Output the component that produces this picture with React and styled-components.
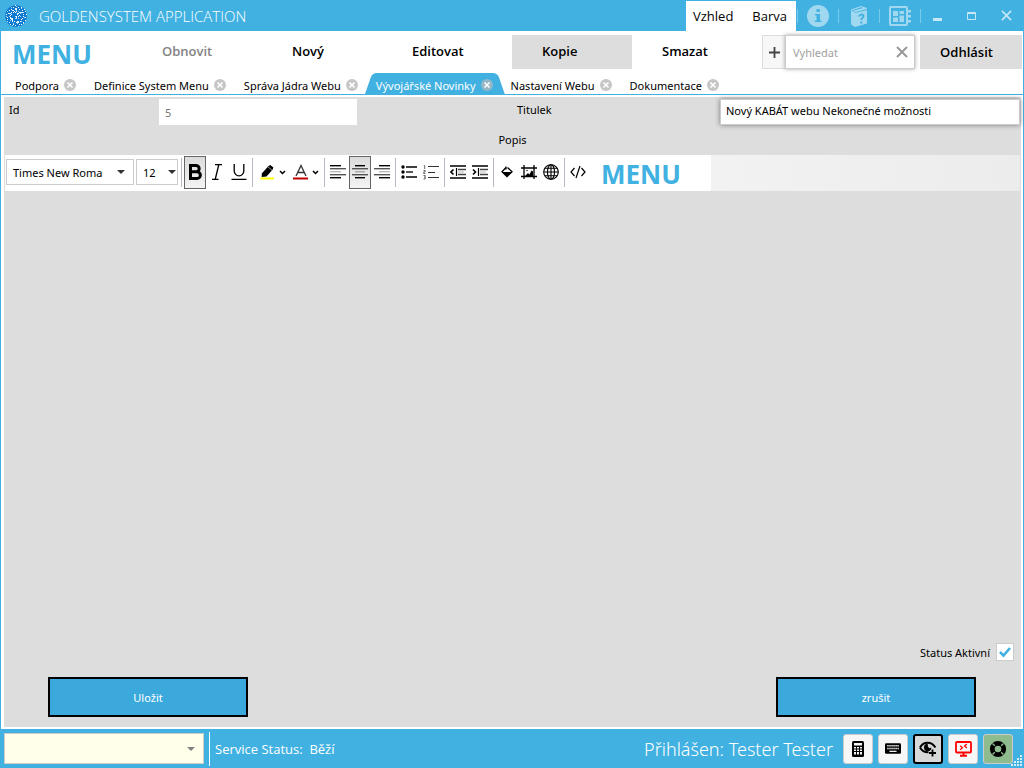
import React from "react";
import styled, { createGlobalStyle, css } from "styled-components";

const blue = "#41b1e1";
const grey = "#dddddd";

const GlobalStyle = createGlobalStyle`
  *, *::before, *::after { box-sizing: border-box; }
  body { margin: 0; }
  body, button, input, select, textarea {
    font-family: "Open Sans", "Noto Sans", "Liberation Sans", sans-serif;
  }
  button { border: 0; padding: 0; background: none; color: inherit; cursor: pointer; }
  svg { display: block; flex: none; }
`;

const smallText = css`
  font-family: "Noto Sans", "Open Sans", sans-serif;
  font-size: 11px;
`;

const Window = styled.div`
  min-height: 100vh;
  display: flex;
  flex-direction: column;
  background: ${blue};
`;

/* ---------- title bar ---------- */
const TitleBar = styled.header`
  height: 31px;
  display: flex;
  align-items: center;
  padding: 0 1px 0 4px;
  color: #fff;
`;
const AppTitle = styled.h1`
  flex: 1;
  margin: 0 0 0 11px;
  padding-top: 1px;
  font-size: 15px;
  font-weight: 300;
  line-height: 30px;
  white-space: nowrap;
`;
const ThemeMenu = styled.nav`
  display: flex;
  align-self: stretch;
  justify-content: space-between;
  width: 110px;
  margin-top: 1px;
  padding: 0 9px 0 7px;
  background: #fff;
`;
const ThemeButton = styled.button`
  color: #000;
  font-size: 13px;
  line-height: 30px;
`;
const TitleTools = styled.div`
  display: flex;
  align-items: center;
  padding: 0 1px;
`;
const TitleTool = styled.button`
  width: 41px;
  height: 31px;
  display: flex;
  align-items: center;
  justify-content: center;
  color: #a0d8f0;
`;
const ToolDivider = styled.span`
  width: 1px;
  height: 14px;
  margin-right: -1px;
  background: #7ac8ea;
`;
const WindowButton = styled.button`
  width: 34px;
  height: 31px;
  display: flex;
  align-items: center;
  justify-content: center;
  color: #c6e8f6;
`;

/* ---------- menu ---------- */
const Body = styled.div`
  flex: 1;
  display: flex;
  flex-direction: column;
  margin: 0 1px;
  background: #fff;
`;
const MenuBar = styled.div`
  height: 42px;
  display: flex;
  align-items: flex-start;
  padding: 4px 1px 0 11px;
`;
const MenuWord = styled.span`
  flex: none;
  color: ${blue};
  font-size: 26px;
  font-weight: 700;
  line-height: 34px;
`;
const MenuTitle = styled(MenuWord)`
  width: 120px;
  margin-top: 2px;
`;
const MenuGroup = styled.div`
  display: flex;
  flex: none;
  margin-right: 10px;
`;
const MenuButton = styled.button`
  width: 120px;
  height: 34px;
  padding: 0 0 2px 30px;
  text-align: left;
  font-size: 13px;
  font-weight: 600;
  color: ${(p) => (p.disabled ? "#838383" : "#000")};
  background: ${(p) => (p.$active ? grey : "transparent")};
`;
const Search = styled.div`
  flex: 1;
  min-width: 0;
  display: flex;
  margin-right: 5px;
`;
const AddButton = styled.button`
  flex: none;
  width: 23px;
  height: 34px;
  display: flex;
  align-items: center;
  justify-content: center;
  border: 1px solid ${grey};
  border-right: 0;
  background: #f7f7f7;
  color: #444;
`;
const SearchBox = styled.div`
  flex: 1;
  min-width: 0;
  height: 34px;
  display: flex;
  align-items: center;
  padding: 0 6px 0 7px;
  border: 1px solid #ccc;
  background: #fff;
  box-shadow: 0 0 4px rgba(0, 0, 0, 0.35);
  color: #999;
`;
const SearchInput = styled.input`
  ${smallText}
  flex: 1;
  min-width: 0;
  padding: 0;
  border: 0;
  outline: 0;
  &::placeholder { color: #a0a0a0; opacity: 1; }
`;
const LogoutButton = styled.button`
  flex: none;
  width: 102px;
  height: 34px;
  padding-right: 9px;
  background: ${grey};
  font-size: 13px;
  font-weight: 600;
`;

/* ---------- tabs ---------- */
const TabBar = styled.div`
  height: 22px;
  display: flex;
  border-bottom: 1px solid ${blue};
  padding-left: 5px;
`;
const Tab = styled.div`
  position: relative;
  height: 21px;
  display: flex;
  align-items: center;
  gap: 5px;
  padding: 2px 9px 0 9px;
  color: ${(p) => (p.$active ? "#fff" : "#000")};
`;
const TabShape = styled.svg`
  position: absolute;
  top: 0;
  left: -2px;
  width: calc(100% + 5px);
  height: 21px;
  fill: ${blue};
`;
const TabLabel = styled.button`
  ${smallText}
  position: relative;
  padding-top: 2px;
  line-height: 18px;
  white-space: nowrap;
`;
const TabClose = styled.button`
  position: relative;
  width: 12px;
  height: 12px;
  border-radius: 6px;
  background: ${(p) => (p.$active ? "#95b8c9" : "#c6c6c6")};
  color: #fff;
`;

/* ---------- form ---------- */
const Panel = styled.main`
  flex: 1;
  display: flex;
  flex-direction: column;
  margin: 2px 2px 2px 3px;
  background: ${grey};
`;
const FieldRow = styled.div`
  height: 28px;
  display: grid;
  grid-template-columns: 155px 1fr 203px 300px;
  padding: 2px 1px 0 0;
`;
const fieldText = css`
  ${smallText}
  line-height: 22px;
`;
const FieldLabel = styled.label`
  ${fieldText}
  padding-left: ${(p) => (p.$wide ? "0" : "5px")};
`;
const Field = styled.input`
  ${fieldText}
  width: ${(p) => (p.$full ? "100%" : "198px")};
  height: 26px;
  border: ${(p) => (p.$full ? "1px solid #ccc" : "0")};
  outline: 0;
  background: #fff;
  color: ${(p) => (p.readOnly ? "#777" : "#000")};
  padding: ${(p) => (p.$full ? "0 5px 3px" : "0 6px")};
  box-shadow: ${(p) => (p.$full ? "0 0 5px rgba(0, 0, 0, 0.45)" : "none")};
`;
const FieldCell = styled.span`
  display: flex;
`;
const Caption = styled.label`
  ${fieldText}
  height: 30px;
  padding-top: 4px;
  text-align: center;
`;
const ToolbarTray = styled.div`
  height: 36px;
  display: flex;
  margin: 0 1px;
  background: linear-gradient(90deg, #f4f4f4 60%, #ececec);
`;
const Toolbar = styled.div`
  width: 706px;
  display: flex;
  align-items: center;
  padding: 0 0 2px 1px;
  border-radius: 0 2px 2px 0;
  background: #fff;
`;
const Combo = styled.div`
  position: relative;
  width: ${(p) => (p.$small ? "42px" : "128px")};
  margin-right: ${(p) => (p.$small ? "1px" : "2px")};
`;
const ComboSelect = styled.select`
  ${smallText}
  appearance: none;
  display: block;
  width: 100%;
  height: 26px;
  padding: 0 ${(p) => (p.$small ? "14px" : "30px")} 0 6px;
  border: 1px solid #ccc;
  border-radius: 0;
  background: #fff;
  color: #000;
  overflow: hidden;
`;
const ComboArrow = styled.span`
  position: absolute;
  top: 50%;
  right: ${(p) => (p.$inset ? "9px" : "2px")};
  margin-top: -2px;
  border: 4px solid transparent;
  border-top-color: ${(p) => p.$color || "#333"};
  border-bottom: 0;
  pointer-events: none;
`;
const Divider = styled.span`
  width: 1px;
  height: 29px;
  margin: 0 2px;
  background: #b4bac4;
`;
const FormatButton = styled.button`
  width: 22px;
  height: 33px;
  display: flex;
  align-items: center;
  justify-content: center;
  ${(p) =>
    p.$pressed &&
    css`
      border: 1px solid #666;
      background: linear-gradient(#dcdcdc, #f3f3f3);
    `}
`;
const SplitGroup = styled.div`
  display: grid;
  grid-template-columns: 34px 33px;
`;
const SplitButton = styled.button`
  height: 33px;
  display: flex;
  align-items: center;
  justify-content: space-between;
  padding: 0 3px 0 4px;
`;
const ToolbarWord = styled(MenuWord)`
  margin: 4px 0 0 12px;
`;
const Editor = styled.textarea`
  flex: 1;
  min-height: 120px;
  padding: 8px;
  border: 0;
  outline: 0;
  resize: none;
  background: transparent;
`;
const StatusLabel = styled.label`
  ${smallText}
  display: flex;
  align-items: center;
  justify-content: flex-end;
  gap: 6px;
  padding-right: 7px;
  line-height: 18px;
`;
const StatusCaption = styled.span`
  padding-top: 2px;
`;
const CheckWrap = styled.span`
  position: relative;
  width: 18px;
  height: 18px;
`;
const Check = styled.input`
  appearance: none;
  display: block;
  width: 18px;
  height: 18px;
  margin: 0;
  border: 1px solid #ccc;
  background: #fff;
  & + svg { position: absolute; top: 3px; left: 3px; visibility: hidden; pointer-events: none; }
  &:checked + svg { visibility: visible; }
`;
const Actions = styled.div`
  display: flex;
  justify-content: space-between;
  padding: 15px 45px 10px 44px;
`;
const ActionButton = styled.button`
  ${smallText}
  width: 200px;
  height: 40px;
  border: 2px solid #000;
  background: #3ba9dc;
  color: #fff;
`;

/* ---------- status bar ---------- */
const StatusBar = styled.footer`
  position: relative;
  height: 39px;
  display: flex;
  align-items: center;
  padding: 0 11px 0 4px;
  color: #fff;
`;
const ServiceSelect = styled.div`
  position: relative;
  width: 200px;
`;
const ServiceList = styled.select`
  appearance: none;
  display: block;
  width: 100%;
  height: 31px;
  border: 1px solid #ccc;
  border-radius: 0;
  background: #ffffea;
`;
const StatusText = styled.span`
  flex: 1;
  margin-left: 5px;
  padding-left: 5px;
  border-left: 1px solid #fff;
  font-size: 13px;
  line-height: 34px;
  white-space: pre;
`;
const UserText = styled.span`
  margin-right: 10px;
  padding-top: 2px;
  font-family: "Noto Sans", "Open Sans", sans-serif;
  font-size: 18px;
  font-weight: 300;
  line-height: 33px;
`;
const QuickButtons = styled.div`
  display: flex;
  gap: 5px;
`;
const QuickButton = styled.button`
  width: 30px;
  height: 30px;
  display: flex;
  align-items: center;
  justify-content: center;
  border: ${(p) => (p.$selected ? "2px solid #000" : "1px solid #ccc")};
  border-radius: 3px;
  background: ${(p) => p.$fill || "#f7f7f7"};
  color: ${(p) => p.$ink || "#000"};
`;
const Grip = styled.svg`
  position: absolute;
  right: 2px;
  bottom: 2px;
`;

/* ---------- drawings ---------- */
const Cross = ({ size, width }) => (
  <svg width={size} height={size} viewBox="0 0 12 12" stroke="currentColor" strokeWidth={width} fill="none">
    <path d="M1 1 11 11M11 1 1 11" />
  </svg>
);

const logoDots = Array.from({ length: 130 }, (_, i) => {
  const angle = i * 2.39996;
  const radius = Math.sqrt(i / 130) * 10.8;
  return { x: 11.5 + Math.cos(angle) * radius, y: 11.5 + Math.sin(angle) * radius, tone: (i * 7) % 5 };
});
const Logo = () => (
  <svg width="24" height="24" viewBox="0 0 24 24" aria-hidden="true">
    <circle cx="12" cy="12" r="10.8" fill="#0d79d0" />
    {logoDots.map((d, i) =>
      d.tone < 3 ? (
        <rect key={i} x={Math.round(d.x)} y={Math.round(d.y)} width="1" height="1" fill={d.tone === 2 ? "#a7d8f5" : "#fff"} />
      ) : null
    )}
    <path d="M4 9h3v1H4zM11 4h2v2h-2zM15 8h3v1h-3zM7 14h2v2H7zM13 17h2v2h-2zM8 6h2v1H8z" fill="#e6f5fd" />
  </svg>
);

const InfoIcon = () => (
  <svg width="22" height="22" viewBox="0 0 22 22">
    <circle cx="11" cy="11" r="11" fill="currentColor" />
    <path d="M9.500 4h3.200v3H9.500zM8 9h5v6.500h1.500V17H7.800v-1.500h1.700V10.500H8z" fill={blue} />
  </svg>
);
const HelpBook = () => (
  <svg width="18" height="22" viewBox="0 0 18 22">
    <path d="M1 4.500 11 1l6 2v1L5.500 7.200 2.500 6 13 3l-2-.7L1.800 5.500V6L5 7.500V22L1 19.500zM5 8l12-3v13.500L5 22z" fill="currentColor" />
    <path d="M9 11.500c.2-2 4.500-3 4.500-.5 0 2-2.200 1.800-2.200 4M11.300 16.500v2" fill="none" stroke={blue} strokeWidth="1.900" />
  </svg>
);
const BoardIcon = () => (
  <svg width="22" height="20" viewBox="0 0 22 20">
    <rect x="1" y="1" width="17" height="18" rx="1" fill="none" stroke="currentColor" strokeWidth="2" />
    <path d="M4 5h5v5H4zM4 11.500h5V16H4zM10.500 5H15v3h-4.500zM10.500 9.500H15V16h-4.500zM19 4h3v2.500h-3zM19 9h3v2.500h-3zM19 14h3v2.500h-3z" fill="currentColor" />
  </svg>
);

const Lines = ({ rows }) => (
  <svg width="16" height="16" viewBox="0 0 16 16">
    {rows.map(([x, w, color], i) => (
      <rect key={i} x={x} y={1 + i * 3} width={w} height="1.400" fill={color} />
    ))}
  </svg>
);
const AlignLeft = () => <Lines rows={[[0, 11, "#000"], [0, 16, "#555"], [0, 11, "#bbb"], [0, 16, "#555"], [0, 11, "#000"]]} />;
const AlignCenter = () => <Lines rows={[[3, 10, "#000"], [0, 16, "#555"], [3, 10, "#aaa"], [0, 16, "#555"], [3, 10, "#000"]]} />;
const AlignRight = () => <Lines rows={[[5, 11, "#000"], [0, 16, "#555"], [5, 11, "#bbb"], [0, 16, "#555"], [5, 11, "#000"]]} />;

const BoldIcon = () => (
  <svg width="16" height="16" viewBox="0 0 16 16" fill="none" stroke="#000" strokeWidth="3">
    <path d="M3.500 1.500H9a3 3 0 0 1 0 6.300H3.500zM3.500 7.800H10a3.200 3.200 0 0 1 0 6.700H3.500z" />
  </svg>
);
const ItalicIcon = () => (
  <svg width="16" height="16" viewBox="0 0 16 16" fill="none" stroke="#000" strokeWidth="1.300">
    <path d="M6 .7h7M3 15.300h6.500M9.700 1 6.300 15" />
  </svg>
);
const UnderlineIcon = () => (
  <svg width="16" height="16" viewBox="0 0 16 16" fill="none" stroke="#000" strokeWidth="1.300">
    <path d="M3.200 0v7a4.800 4.800 0 0 0 9.600 0V0M.5 15.300h15" />
  </svg>
);
const MarkerIcon = () => (
  <svg width="16" height="16" viewBox="0 0 16 16">
    <path d="M2.800 9.500 9.500 2l1.700-1 3.200 2.600-.9 2.200L7.500 12.500l-4.800.5z" fill="#000" />
    <path d="m9 2.800 4 3.500" stroke="#fff" strokeWidth=".6" />
    <path d="M1.500 14.500h13.500" stroke="#ff0" strokeWidth="2" />
  </svg>
);
const FontColorIcon = () => (
  <svg width="16" height="16" viewBox="0 0 16 16">
    <path d="M3 12 8 1.500l5 10.500M4.800 8.500h6.400" fill="none" stroke="#333" strokeWidth="1.300" />
    <path d="M0 14.500h15" stroke="#c00000" strokeWidth="2" />
  </svg>
);
const Chevron = () => (
  <svg width="7" height="5" viewBox="0 0 7 5">
    <path d="M1 1l2.500 2.500L6 1" fill="none" stroke="#000" strokeWidth="1.500" />
  </svg>
);
const BulletIcon = () => (
  <svg width="16" height="16" viewBox="0 0 16 16">
    <path d="M5 3h11M5 13h11" stroke="#000" strokeWidth="1.300" />
    <path d="M5 8h7" stroke="#000" strokeWidth="1.300" />
    <g fill="#000"><circle cx="2" cy="3" r="1.700" /><circle cx="2" cy="8" r="1.700" /><circle cx="2" cy="13" r="1.700" /></g>
  </svg>
);
const NumberIcon = () => (
  <svg width="16" height="16" viewBox="0 0 16 16">
    <path d="M5 2.500h11M5 13.500h11" stroke="#333" strokeWidth="1" />
    <path d="M5 8.500h7" stroke="#333" strokeWidth="1" />
    <path d="M.8 1.500h.9V5M.5 6.500h1.700v1.500H.7V9.500h1.700M.5 11.500h1.700V15H.5M1 13.200h1" fill="none" stroke="#444" strokeWidth=".8" />
  </svg>
);
const IndentIcon = ({ inward }) => (
  <svg width="16" height="16" viewBox="0 0 16 16" fill="none" stroke="#000">
    <path d="M0 2h16M0 14h16" strokeWidth="1.400" />
    <path d="M8 5.500h8M8 10.500h8" stroke="#444" strokeWidth="1.300" />
    <path d="M8 8h6" stroke="#bbb" />
    <path d="M6.500 4v8" strokeWidth="1.200" />
    <path d={inward ? "M1 5.500 3.500 8 1 10.500" : "M3.500 5.500 1 8l2.500 2.500"} strokeWidth="1.600" />
  </svg>
);
const FillIcon = () => (
  <svg width="16" height="16" viewBox="0 0 16 16">
    <path d="M7 2.500v3M7 3.500 3 7.700l5 4.800 5-4.800L8.500 3.500" fill="none" stroke="#000" strokeWidth="1.300" />
    <path d="M3 8h10l-5 4.500z" fill="#000" />
  </svg>
);
const ImageIcon = () => (
  <svg width="16" height="16" viewBox="0 0 16 16">
    <path d="M0 4h16M0 12.500h16M3 1v14M13 1v14" stroke="#000" strokeWidth="1.300" />
    <path d="m4 12 3-3 1.500 1.500 2-4 1.500 1v4.500z" fill="#000" />
    <circle cx="6" cy="6.500" r=".7" />
  </svg>
);
const GlobeIcon = () => (
  <svg width="16" height="16" viewBox="0 0 16 16" fill="none" stroke="#000" strokeWidth="1.100">
    <circle cx="8" cy="8" r="7.300" />
    <ellipse cx="8" cy="8" rx="3.500" ry="7.300" />
    <path d="M8 .7v14.600M.7 8h14.600M1.800 4.200h12.400M1.800 11.800h12.400" />
  </svg>
);
const CodeIcon = () => (
  <svg width="16" height="16" viewBox="0 0 16 16" fill="none" stroke="#000" strokeWidth="1.200">
    <path d="M4.500 4 1 8l3.500 4M11.500 4 15 8l-3.500 4M10 2 6 14" />
  </svg>
);

const CalculatorIcon = () => (
  <svg width="12" height="16" viewBox="0 0 12 16">
    <rect width="12" height="16" rx="1.500" fill="currentColor" />
    <path d="M2 2h8v2.500H2zM2 6h2v1.500H2zM5 6h2v1.500H5zM8 6h2v1.500H8zM2 8.500h2V10H2zM5 8.500h2V10H5zM8 8.500h2V10H8zM2 11h2v2.500H2zM5 11h2v2.500H5zM8 11h2v2.500H8z" fill="#f7f7f7" />
  </svg>
);
const KeyboardIcon = () => (
  <svg width="16" height="11" viewBox="0 0 18 12">
    <rect width="18" height="12" rx="1.500" fill="currentColor" />
    <path d="M2.500 3h13M2.500 6h13" stroke="#f7f7f7" strokeWidth="1.600" strokeDasharray="1.600 .7" />
    <path d="M5 9.200h8" stroke="#f7f7f7" strokeWidth="1.400" />
  </svg>
);
const EyePlusIcon = () => (
  <svg width="18" height="16" viewBox="0 0 18 16">
    <path d="M1 6.500C4.500 0 12.500 0 16.500 6.500M1 6.500c2 3.500 5 5 8.500 4.800" fill="none" stroke="#000" strokeWidth="2" />
    <path d="M8.700 2.800a3.700 3.700 0 1 0 0 7.400 3.700 3.700 0 0 0 3.700-3.700l-2 .8-1.500-1.800z" fill="#000" />
    <path d="M13.500 8.500v7M10 12h7" stroke="#000" strokeWidth="1.800" />
  </svg>
);
const RemoteIcon = () => (
  <svg width="17" height="16" viewBox="0 0 17 16" fill="none" stroke="currentColor">
    <rect x="1" y="1" width="15" height="10.500" rx="1" strokeWidth="1.800" />
    <path d="m5.200 4.800 2.200 2-2.200 2M11.800 3 9.600 5l2.200 2" strokeWidth="1.300" />
    <path d="M8.500 11v3M5 14.800h7" strokeWidth="2" />
  </svg>
);
const LifebuoyIcon = () => (
  <svg width="18" height="18" viewBox="0 0 18 18" fill="none">
    <circle cx="9" cy="9" r="5.700" stroke="#000" strokeWidth="4.800" />
    <path d="m3.500 3.500 2.300 2.300M14.500 3.500l-2.300 2.300M3.500 14.500l2.300-2.300M14.500 14.500l-2.300-2.300" stroke="#8fbc8f" strokeWidth="1.300" />
  </svg>
);

const tabs = [
  "Podpora",
  "Definice System Menu",
  "Správa Jádra Webu",
  "Vývojářské Novinky",
  "Nastavení Webu",
  "Dokumentace",
];
const activeTab = "Vývojářské Novinky";

const gripDots = [[9, 0], [6, 3], [9, 3], [3, 6], [6, 6], [9, 6], [0, 9], [3, 9], [6, 9], [9, 9]];

export default function App() {
  return (
    <Window>
      <GlobalStyle />
      <TitleBar>
        <Logo />
        <AppTitle>GOLDENSYSTEM APPLICATION</AppTitle>
        <ThemeMenu>
          <ThemeButton>Vzhled</ThemeButton>
          <ThemeButton>Barva</ThemeButton>
        </ThemeMenu>
        <TitleTools>
          <ToolDivider />
          <TitleTool aria-label="Info"><InfoIcon /></TitleTool>
          <ToolDivider />
          <TitleTool aria-label="Help"><HelpBook /></TitleTool>
          <ToolDivider />
          <TitleTool aria-label="Board"><BoardIcon /></TitleTool>
          <ToolDivider />
        </TitleTools>
        <WindowButton aria-label="Minimize">
          <svg width="10" height="10"><path d="M0 8.500h9" stroke="currentColor" strokeWidth="3" /></svg>
        </WindowButton>
        <WindowButton aria-label="Maximize">
          <svg width="10" height="10"><path d="M.5 1.500h8v7h-8zM.5 2.500h8" fill="none" stroke="currentColor" /></svg>
        </WindowButton>
        <WindowButton aria-label="Close"><Cross size={11} width={1.8} /></WindowButton>
      </TitleBar>

      <Body>
        <MenuBar>
          <MenuTitle>MENU</MenuTitle>
          <MenuGroup>
            <MenuButton disabled>Obnovit</MenuButton>
          </MenuGroup>
          <MenuGroup>
            <MenuButton>Nový</MenuButton>
            <MenuButton>Editovat</MenuButton>
          </MenuGroup>
          <MenuGroup>
            <MenuButton $active>Kopie</MenuButton>
            <MenuButton>Smazat</MenuButton>
          </MenuGroup>
          <Search>
            <AddButton aria-label="Add">
              <svg width="11" height="11"><path d="M5.500 0v11M0 5.500h11" stroke="currentColor" strokeWidth="1.800" /></svg>
            </AddButton>
            <SearchBox>
              <SearchInput aria-label="Vyhledat" placeholder="Vyhledat" />
              <button aria-label="Clear"><Cross size={12} width={2} /></button>
            </SearchBox>
          </Search>
          <LogoutButton>Odhlásit</LogoutButton>
        </MenuBar>

        <TabBar>
          {tabs.map((name) => {
            const active = name === activeTab;
            return (
              <Tab key={name} $active={active}>
                {active && (
                  <TabShape viewBox="0 0 142 21" preserveAspectRatio="none" aria-hidden="true">
                    <path d="M0 21 6 4Q8 0 12 0H130Q134 0 136 4L142 21z" />
                  </TabShape>
                )}
                <TabLabel>{name}</TabLabel>
                <TabClose $active={active} aria-label={`Close ${name}`}>
                  <svg width="12" height="12"><path d="M3.500 3.500l5 5M8.500 3.500l-5 5" stroke="currentColor" strokeWidth="1.600" /></svg>
                </TabClose>
              </Tab>
            );
          })}
        </TabBar>

        <Panel>
          <FieldRow>
            <FieldLabel htmlFor="record-id">Id</FieldLabel>
            <FieldCell><Field id="record-id" defaultValue="5" readOnly /></FieldCell>
            <FieldLabel htmlFor="record-title" $wide>Titulek</FieldLabel>
            <Field id="record-title" defaultValue="Nový KABÁT webu Nekonečné možnosti" $full />
          </FieldRow>
          <Caption htmlFor="record-text">Popis</Caption>
          <ToolbarTray>
            <Toolbar>
              <Combo>
                <ComboSelect aria-label="Font"><option>Times New Roman</option></ComboSelect>
                <ComboArrow $inset />
              </Combo>
              <Combo $small>
                <ComboSelect aria-label="Size" $small><option>12</option></ComboSelect>
                <ComboArrow />
              </Combo>
              <Divider />
              <FormatButton $pressed aria-label="Bold"><BoldIcon /></FormatButton>
              <FormatButton aria-label="Italic"><ItalicIcon /></FormatButton>
              <FormatButton aria-label="Underline"><UnderlineIcon /></FormatButton>
              <Divider />
              <SplitGroup>
                <SplitButton aria-label="Highlight"><MarkerIcon /><Chevron /></SplitButton>
                <SplitButton aria-label="Text color"><FontColorIcon /><Chevron /></SplitButton>
              </SplitGroup>
              <Divider />
              <FormatButton aria-label="Align left"><AlignLeft /></FormatButton>
              <FormatButton $pressed aria-label="Align center"><AlignCenter /></FormatButton>
              <FormatButton aria-label="Align right"><AlignRight /></FormatButton>
              <Divider />
              <FormatButton aria-label="Bullets"><BulletIcon /></FormatButton>
              <FormatButton aria-label="Numbering"><NumberIcon /></FormatButton>
              <Divider />
              <FormatButton aria-label="Outdent"><IndentIcon /></FormatButton>
              <FormatButton aria-label="Indent"><IndentIcon inward /></FormatButton>
              <Divider />
              <FormatButton aria-label="Fill"><FillIcon /></FormatButton>
              <FormatButton aria-label="Image"><ImageIcon /></FormatButton>
              <FormatButton aria-label="Link"><GlobeIcon /></FormatButton>
              <Divider />
              <FormatButton aria-label="Source"><CodeIcon /></FormatButton>
              <ToolbarWord>MENU</ToolbarWord>
            </Toolbar>
          </ToolbarTray>
          <Editor id="record-text" />
          <StatusLabel>
            <StatusCaption>Status Aktivní</StatusCaption>
            <CheckWrap>
              <Check type="checkbox" defaultChecked />
              <svg width="12" height="12"><path d="M1 6l3.500 3.500L11 2" fill="none" stroke={blue} strokeWidth="2.600" /></svg>
            </CheckWrap>
          </StatusLabel>
          <Actions>
            <ActionButton>Uložit</ActionButton>
            <ActionButton>zrušit</ActionButton>
          </Actions>
        </Panel>
      </Body>

      <StatusBar>
        <ServiceSelect>
          <ServiceList aria-label="Service" />
          <ComboArrow $inset $color="#808080" />
        </ServiceSelect>
        <StatusText>Service Status:  Běží</StatusText>
        <UserText>Přihlášen: Tester Tester</UserText>
        <QuickButtons>
          <QuickButton aria-label="Calculator"><CalculatorIcon /></QuickButton>
          <QuickButton aria-label="Keyboard"><KeyboardIcon /></QuickButton>
          <QuickButton aria-label="Watch" $selected $fill="#d8d8d8"><EyePlusIcon /></QuickButton>
          <QuickButton aria-label="Remote desktop" $ink="#f00"><RemoteIcon /></QuickButton>
          <QuickButton aria-label="Support" $fill="#8fbc8f"><LifebuoyIcon /></QuickButton>
        </QuickButtons>
        <Grip width="11" height="11" aria-hidden="true">
          {gripDots.map(([x, y]) => (
            <rect key={`${x}-${y}`} x={x} y={y} width="2" height="2" fill="#d5eef9" />
          ))}
        </Grip>
      </StatusBar>
    </Window>
  );
}
